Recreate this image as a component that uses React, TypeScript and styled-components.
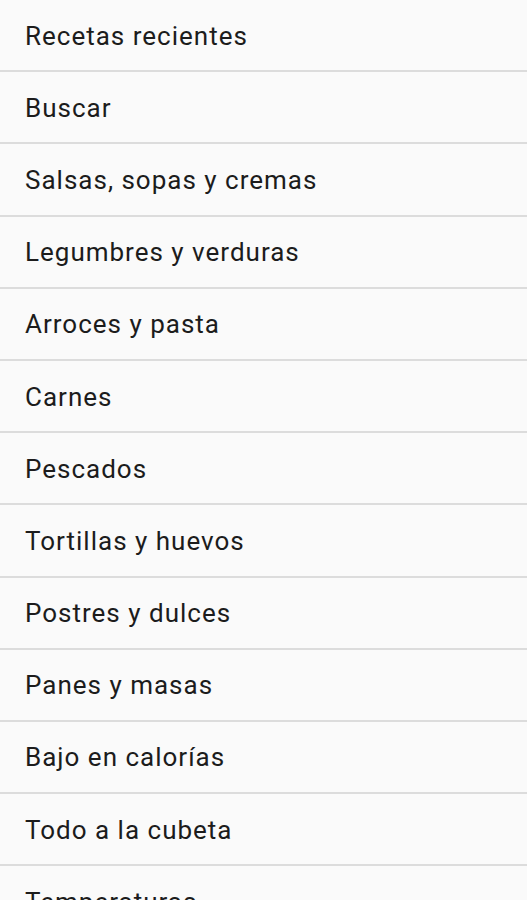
import React from "react";
import styled, { createGlobalStyle } from "styled-components";

const GlobalStyle = createGlobalStyle`
  html, body {
    margin: 0;
    padding: 0;
    background: #fafafa;
  }
  body {
    font-family: Roboto, "Noto Sans", Arial, sans-serif;
  }
`;

const List = styled.ul`
  list-style: none;
  margin: 0;
  padding: 0;
  width: 527px;
  height: 900px;
  overflow: hidden;
  background: #fafafa;
`;

const Item = styled.li`
  display: flex;
  align-items: center;
  box-sizing: border-box;
  height: 72.2px;
  padding: 1px 25px 0;
  border-bottom: 2px solid #dcdcdc;
  font-size: 26px;
  letter-spacing: 1px;
  color: #1c1c1c;
  white-space: nowrap;
`;

const categories = [
  "Recetas recientes",
  "Buscar",
  "Salsas, sopas y cremas",
  "Legumbres y verduras",
  "Arroces y pasta",
  "Carnes",
  "Pescados",
  "Tortillas y huevos",
  "Postres y dulces",
  "Panes y masas",
  "Bajo en calorías",
  "Todo a la cubeta",
  "Temperaturas",
];

export default function App() {
  return (
    <>
      <GlobalStyle />
      <List>
        {categories.map((name) => (
          <Item key={name}>{name}</Item>
        ))}
      </List>
    </>
  );
}
